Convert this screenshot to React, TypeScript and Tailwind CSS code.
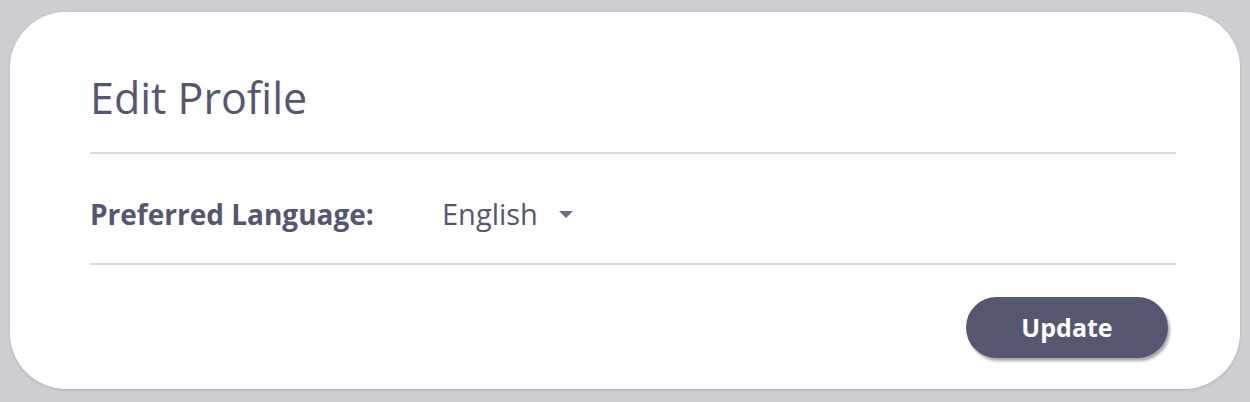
import * as React from "react";

export default function App() {
  return (
    <div
      className="min-h-[402px] w-full bg-[#cdcdd2] px-[10px] pt-[12px] pb-[13px]"
      style={{ fontFamily: "'Open Sans', 'Noto Sans', sans-serif" }}
    >
      <div className="rounded-[56px] bg-white pl-[80px] pr-[64px] pt-[61px] pb-[31px] shadow-[0_1px_3px_rgba(0,0,0,0.15)]">
        <h1 className="text-[43px] leading-[50px] font-normal text-[#555671]">
          Edit Profile
        </h1>
        <div className="mt-[29px] h-[2px] bg-[#d9d9e3]" />
        <div className="flex h-[109px] items-center pt-[10px]">
          <span className="w-[352px] text-[28px] font-bold text-[#555671]">
            Preferred Language:
          </span>
          <button className="flex items-center gap-[20px] text-[29px] text-[#555671]">
            English
            <svg width="16" height="8" viewBox="0 0 16 8" className="mt-[2px]">
              <path d="M1 0 L15 0 L8 7 Z" fill="#6b6c85" />
            </svg>
          </button>
        </div>
        <div className="h-[2px] bg-[#d9d9e3]" />
        <div className="flex justify-end pt-[32px] pr-[8px]">
          <button className="h-[61px] w-[202px] rounded-full bg-[#555670] text-[25px] font-bold text-white shadow-[2px_3px_3px_rgba(0,0,0,0.35)]">
            Update
          </button>
        </div>
      </div>
    </div>
  );
}
